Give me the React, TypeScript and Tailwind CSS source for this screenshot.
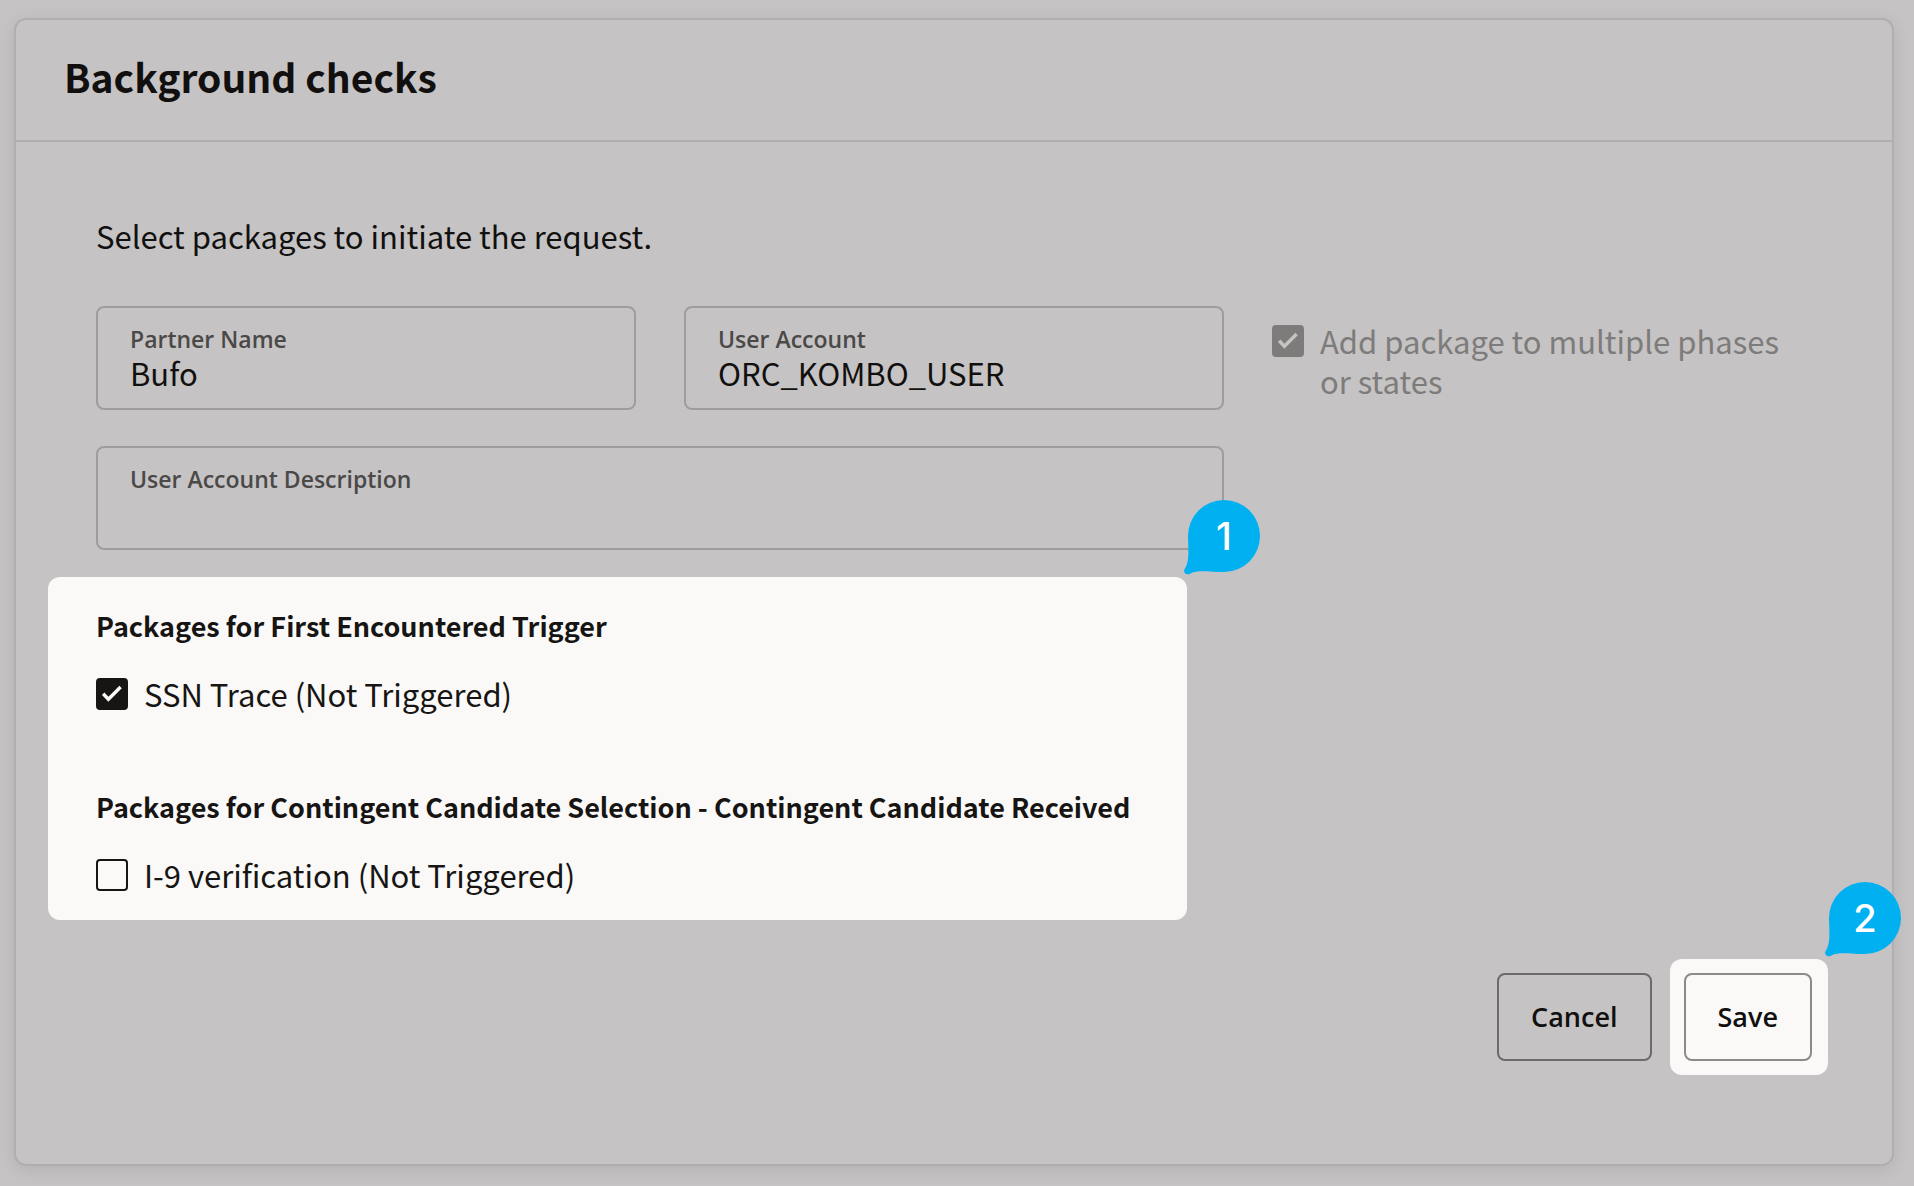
import { useId, useState } from 'react';

interface TextFieldProps {
    label: string;
    value?: string;
    className?: string;
}

interface CheckboxProps {
    label: string;
    defaultChecked?: boolean;
    disabled?: boolean;
}

function TextField({ label, value = '', className = '' }: TextFieldProps) {
    const id = useId();

    return (
        <div className={`h-26 rounded-lg border-2 border-[#9e9d9d] px-8 pt-[15px] ${className}`}>
            <label
                htmlFor={id}
                className="block font-['Open_Sans',sans-serif] text-[23px] leading-8 font-semibold text-[#4a4947]"
            >
                {label}
            </label>
            <input
                id={id}
                type="text"
                readOnly
                value={value}
                className="block h-9 w-full bg-transparent text-[31px] leading-9 outline-none"
            />
        </div>
    );
}

function Checkbox({ label, defaultChecked = false, disabled = false }: CheckboxProps) {
    const [checked, setChecked] = useState(defaultChecked);

    return (
        <label className={`flex items-start gap-4 text-[31px] leading-10 ${disabled ? 'text-[#7d7c7a]' : ''}`}>
            <span className="relative mt-1 size-8 shrink-0">
                <input
                    type="checkbox"
                    checked={checked}
                    disabled={disabled}
                    onChange={e => setChecked(e.target.checked)}
                    className="block size-8 appearance-none rounded-sm border-2 border-current checked:bg-current"
                />
                {checked && (
                    <svg
                        viewBox="0 0 32 32"
                        className={`pointer-events-none absolute inset-0 size-8 ${disabled ? 'text-[#c5c3c4]' : 'text-[#fbf9f8]'}`}
                    >
                        <path
                            d="M7.2 15.8 L12.4 21.2 L24.6 9"
                            fill="none"
                            stroke="currentColor"
                            strokeWidth="3.4"
                        />
                    </svg>
                )}
            </span>
            <span>{label}</span>
        </label>
    );
}

// Speech-bubble marker that hangs off the top right corner of its parent
function StepMarker({ step }: { step: number }) {
    return (
        <div className="absolute bottom-full left-full mb-px -ml-[3px] size-[76px]">
            <svg viewBox="0 0 76 76" className="absolute inset-0 size-full text-[#00b0f0]">
                <path
                    d="M40 0 A36 36 0 0 1 40 72 C26 72 14 69.5 6.5 73.4 C2.6 75.8 -1.2 72.8 0.6 69 C6.2 60.5 4 48 4 36 A36 36 0 0 1 40 0 Z"
                    fill="currentColor"
                />
            </svg>
            <span className="absolute top-0 right-0 flex size-18 items-center justify-center font-['Inter',sans-serif] text-[38px] leading-none font-medium text-white">
                {step}
            </span>
        </div>
    );
}

export default function App() {
    return (
        <div className="flex min-h-screen bg-[#c5c3c4] px-5 pt-[18px] pb-5 pl-[14px] font-['Noto_Sans_CJK_SC',sans-serif] text-[#11100f]">
            <main className="flex-1 rounded-xl border-2 border-[#b0afaf] shadow-[0_4px_16px_rgba(60,60,40,0.12)]">
                <header className="border-b-2 border-[#b0afaf] px-12 pt-7 pb-9">
                    <h1 className="text-[39px] leading-14 font-bold">Background checks</h1>
                </header>

                <div className="px-20 pt-[74px] pb-[89px]">
                    <p className="text-[31px] leading-10">Select packages to initiate the request.</p>

                    <div className="mt-[50px] grid grid-cols-3 gap-x-12 gap-y-9">
                        <TextField label="Partner Name" value="Bufo" />
                        <TextField label="User Account" value="ORC_KOMBO_USER" />
                        <div className="pt-[15px]">
                            <Checkbox label="Add package to multiple phases or states" defaultChecked disabled />
                        </div>
                        <TextField label="User Account Description" className="col-span-2" />
                    </div>

                    <div className="grid grid-cols-3 gap-x-12 pt-[27px]">
                        <section className="relative col-span-2 mr-[37px] -ml-12 rounded-xl bg-[#fbf9f8] px-12 pt-[29px] pb-[25px] text-[#161513]">
                            <h2 className="text-[27px] leading-10 font-bold">Packages for First Encountered Trigger</h2>
                            <div className="mt-7">
                                <Checkbox label="SSN Trace (Not Triggered)" defaultChecked />
                            </div>
                            <h2 className="mt-[73px] text-[27px] leading-10 font-bold">
                                Packages for Contingent Candidate Selection - Contingent Candidate Received
                            </h2>
                            <div className="mt-7">
                                <Checkbox label="I-9 verification (Not Triggered)" />
                            </div>
                            <StepMarker step={1} />
                        </section>
                    </div>

                    <div className="mt-[39px] -mr-4 flex items-center justify-end gap-[18px] font-['Open_Sans',sans-serif] text-[27px] font-semibold">
                        <button type="button" className="h-22 rounded-lg border-2 border-[#6c6b6a] px-8">
                            Cancel
                        </button>
                        <div className="relative rounded-xl bg-[#fbf9f8] py-[14px] pr-4 pl-[14px]">
                            <button type="button" className="block h-22 rounded-lg border-2 border-[#8b8a88] px-8">
                                Save
                            </button>
                            <StepMarker step={2} />
                        </div>
                    </div>
                </div>
            </main>
        </div>
    );
}
